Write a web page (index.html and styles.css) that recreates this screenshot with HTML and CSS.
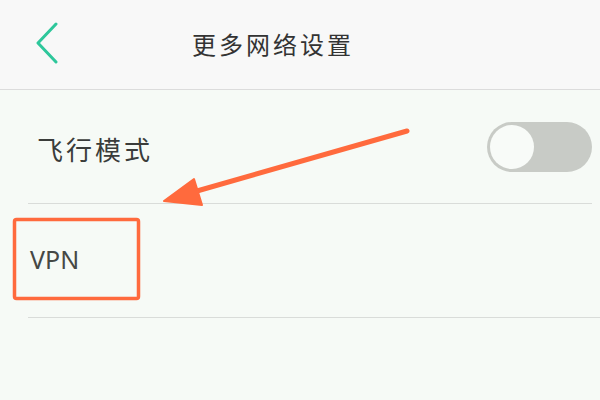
FILE: index.html
```html
<!DOCTYPE html>
<html lang="zh-CN">
<head>
<meta charset="utf-8">
<link rel="stylesheet" href="styles.css">
</head>
<body>
<div class="page">
  <header class="header">
    <svg class="back" width="30" height="44" viewBox="0 0 30 44">
      <polyline points="22,4 4,23 22,42" fill="none" stroke="#2ec79b" stroke-width="3" stroke-linecap="round" stroke-linejoin="round"/>
    </svg>
    <h1 class="title">更多网络设置</h1>
  </header>
  <main class="list">
    <div class="row row-first">
      <span class="label label-cn">飞行模式</span>
      <span class="switch"><span class="knob"></span></span>
    </div>
    <div class="row row-second">
      <span class="label label-en">VPN</span>
    </div>
  </main>
  <svg class="annot" width="600" height="400" viewBox="0 0 600 400">
    <line x1="407" y1="131" x2="190" y2="193" stroke="#ff6a3d" stroke-width="5" stroke-linecap="round"/>
    <polygon points="164,201 194,179 202,205" fill="#ff6a3d" stroke="#ff6a3d" stroke-width="2" stroke-linejoin="round"/>
    <rect x="14.5" y="219.5" width="124" height="79" rx="2" fill="none" stroke="#ff6a3d" stroke-width="3.5"/>
  </svg>
</div>
</body>
</html>
```

FILE: styles.css
```css
html, body {
  margin: 0;
  padding: 0;
}
body {
  background: #f6faf6;
  font-family: "Noto Sans CJK SC", "Noto Sans", sans-serif;
  color: #3a3d3a;
}
.page {
  position: relative;
  width: 600px;
  height: 400px;
  overflow: hidden;
}
.header {
  height: 89px;
  background: #f8f8f8;
  border-bottom: 1px solid #dcdcdc;
  display: flex;
  align-items: center;
}
.back {
  margin-left: 34px;
  margin-top: -5px;
  flex: none;
}
.title {
  margin: 0 0 0 128px;
  padding-bottom: 2px;
  font-size: 24px;
  font-weight: 400;
  letter-spacing: 3px;
  color: #333;
}
.list {
  padding-left: 28px;
}
.row {
  height: 113px;
  border-bottom: 1px solid #d9dcd9;
  display: flex;
  align-items: center;
  justify-content: space-between;
}
.row-first {
  margin-right: 8px;
}
.label-cn {
  padding-left: 9px;
  font-size: 26px;
  letter-spacing: 3px;
  margin-top: 4px;
  color: #3a3c3a;
}
.label-en {
  padding-left: 2px;
  font-family: "Noto Sans", sans-serif;
  font-size: 25px;
  color: #454845;
  margin-top: -4px;
}
.switch {
  width: 105px;
  height: 50px;
  border-radius: 25px;
  background: #c8cbc6;
  display: flex;
  align-items: center;
  padding-left: 3px;
  box-sizing: border-box;
}
.knob {
  width: 44px;
  height: 44px;
  border-radius: 50%;
  background: #f8fbf8;
}
.annot {
  position: absolute;
  left: 0;
  top: 0;
  pointer-events: none;
}
```
